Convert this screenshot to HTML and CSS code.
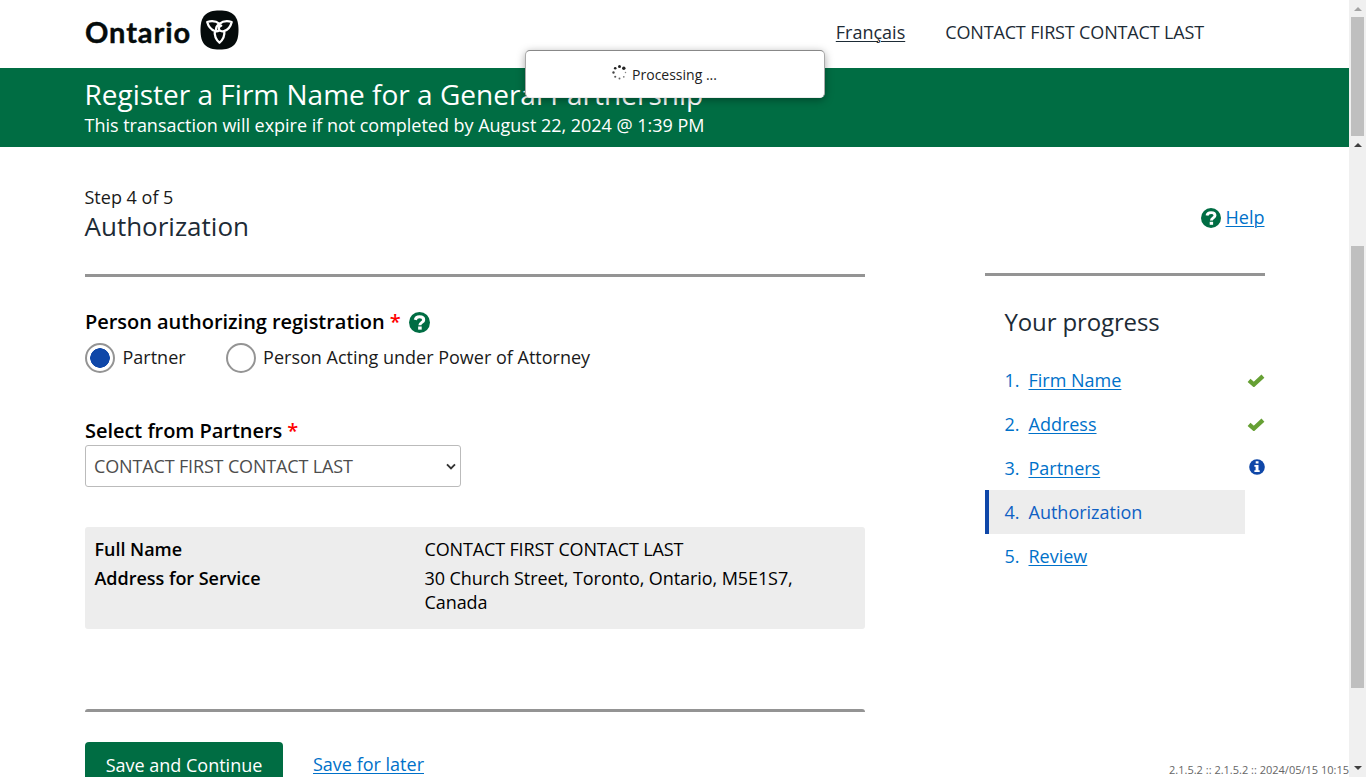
FILE: index.html
```html
<!DOCTYPE html>
<html lang="en">
<head>
<meta charset="utf-8">
<title>Register a Firm Name for a General Partnership</title>
<link rel="stylesheet" href="styles.css">
</head>
<body>
<svg class="defs" width="0" height="0" aria-hidden="true">
  <symbol id="question" viewBox="0 0 20 20">
    <circle cx="10" cy="10" r="10" fill="#006d43"/>
    <path d="M6 7.500C6.400 5.400 8 4.600 10.100 4.600c2.300 0 3.900 1.100 3.900 2.900 0 2.300-3.600 2.500-3.600 5" fill="none" stroke="#fff" stroke-width="2.900"/>
    <rect x="8.700" y="13.800" width="3.400" height="3" fill="#fff"/>
  </symbol>
  <symbol id="check" viewBox="0 0 16 12">
    <path d="M1.600 5.800 6 9.700 14.400 2" fill="none" stroke="#66a034" stroke-width="4"/>
  </symbol>
</svg>
<div class="app">
  <div class="page">
    <header class="masthead">
      <a class="logo"><span class="wordmark">Ontario</span>
        <svg class="trillium" viewBox="0 0 39 40"><path d="M19.500 .5C33 .5 38.500 6 38.500 20S33 39.500 19.500 39.500 .5 34 .5 20 6 .5 19.500 .5Z" fill="#050b0b"/>
          <g fill="none" stroke="#fff" stroke-width="2.300" stroke-linejoin="round" stroke-linecap="round"><path d="M14.800 21C10.800 19.500 8.300 16.200 7.200 12c5-1.500 9-.9 12.300 1.900 3.300-2.800 7.300-3.400 12.200-1.900-1.100 4.500-3.400 7.700-7.400 9 .6 5-1.300 8.700-4.800 11.700-3.500-3-5.300-6.700-4.700-11.700 1.300.5 3 .4 4.500-.4"/><path d="M19.500 13.900c-2.800 1.700-3.800 3.600-3.300 6M24.300 21c-2.300.7-4.300.1-5.200-1.500-.7-1.500.1-3.200 2.100-3.800"/></g></svg>
      </a>
      <a class="lang">Français</a><span class="user caps">CONTACT FIRST CONTACT LAST</span>
    </header>
    <div class="banner"><h1>Register a Firm Name for a General Partnership</h1><p>This transaction will expire if not completed by August 22, 2024 @ 1:39 PM</p></div>
    <div class="content">
      <main class="main">
        <p class="step">Step 4 of 5</p>
        <h2>Authorization</h2>
        <div class="rule"></div>
        <div class="label">Person authorizing registration <b class="req">*</b><svg class="tip"><use href="#question"/></svg></div>
        <div class="radios">
          <span class="radio"><i class="dot on"></i><span class="partner">Partner</span></span>
          <span class="radio"><i class="dot"></i><span>Person Acting under Power of Attorney</span></span>
        </div>
        <div class="label second">Select from Partners <b class="req">*</b></div>
        <div class="select"><span class="caps">CONTACT FIRST CONTACT LAST</span><svg class="chev" viewBox="0 0 10 7"><path d="m1 1.300 4 4 4-4" fill="none" stroke="#333" stroke-width="1.900"/></svg></div>
        <dl class="details">
          <dt>Full Name</dt><dd class="caps">CONTACT FIRST CONTACT LAST</dd>
          <dt>Address for Service</dt><dd class="address">30 Church Street, Toronto, Ontario, M5E1S7, Canada</dd>
        </dl>
        <div class="rule rounded"></div>
        <div class="actions"><a class="save">Save and Continue</a><a class="later">Save for later</a></div>
      </main>
      <aside class="side">
        <div class="help"><svg class="helpicon"><use href="#question"/></svg><a>Help</a></div>
        <div class="rule"></div>
        <h3>Your progress</h3>
        <ol class="steps">
          <li><span class="num">1.</span><a>Firm Name</a><svg class="check"><use href="#check"/></svg></li>
          <li><span class="num">2.</span><a>Address</a><svg class="check"><use href="#check"/></svg></li>
          <li><span class="num">3.</span><a>Partners</a><svg class="info" viewBox="0 0 16 16"><circle cx="8" cy="8" r="7.800" fill="#0f47a8"/><path d="M6.700 2.300h2.800v2.300H6.700zM5.400 5.900h4.100v5.300h1.200v1.900H5.400v-1.900h1.200V7.800H5.400z" fill="#fff"/></svg></li>
          <li class="current"><span class="num">4.</span><span>Authorization</span></li>
          <li><span class="num">5.</span><a>Review</a></li>
        </ol>
      </aside>
    </div>
  </div>
  <div class="scrolls">
    <div class="track top"><i class="arrow up dim"></i><i class="thumb"></i></div>
    <div class="track bottom"><i class="arrow up"></i><i class="thumb"></i><i class="arrow down"></i></div>
  </div>
  <div class="version">2.1.5.2 :: 2.1.5.2 :: 2024/05/15 10:15</div>
  <div class="processing"><svg class="spinner" viewBox="0 0 14 14"><g fill="#222"><circle cx="7" cy="1.500" r="1.400"/><circle cx="11" cy="3" r="1.600"/><circle cx="12.600" cy="7" r=".7" opacity=".55"/><circle cx="11" cy="11" r=".8" opacity=".6"/><circle cx="7" cy="12.600" r=".9" opacity=".7"/><circle cx="3" cy="11" r="1" opacity=".75"/><circle cx="1.400" cy="7" r="1.100" opacity=".85"/><circle cx="3" cy="3" r="1.200"/></g></svg><span>Processing ...</span></div>
</div>
</body>
</html>
```
FILE: styles.css
```css
* { box-sizing: border-box; }
body { margin: 0; overflow: hidden; font: 18px/24px "Open Sans", sans-serif; color: #1a1a1a; background: #fff; }
h1, h2, h3, p, dl, dd, ol { margin: 0; padding: 0; font-weight: 400; }
a { color: #0071c9; text-decoration: underline; text-decoration-thickness: 1px; text-underline-offset: 2px; }
.caps { letter-spacing: -.15px; }
.defs { display: none; }
.app { position: relative; display: flex; width: 1366px; height: 777px; overflow: hidden; }
.page { width: 1349px; }
.masthead { height: 68px; padding: 0 145px 4px 85px; display: flex; align-items: center; }
.masthead .logo { display: flex; align-items: center; text-decoration: none; color: #050b0b; margin-right: auto; }
.wordmark { width: 107px; margin-right: 8px; font: 700 29px/40px Lato, sans-serif; letter-spacing: .9px; -webkit-text-stroke: .4px #050b0b; white-space: nowrap; }
.trillium { width: 39px; height: 40px; margin-top: -4px; }
.masthead .lang { margin-right: 40px; color: #1d2b36; }
.user { color: #1d2b36; }
.banner { height: 79px; padding: 8px 84.500px 0; background: #006d43; color: #fff; }
.banner h1 { font-size: 28px; line-height: 36px; white-space: nowrap; }
.banner p { line-height: 27px; letter-spacing: -.02px; }
.content { display: flex; padding-left: 85px; }
.main { width: 780px; padding-top: 37px; }
.step { line-height: 26px; margin-left: -.5px; }
h2 { font-size: 26px; line-height: 32px; color: #1d2b36; margin-left: -.5px; }
.rule { height: 3px; background: #949494; }
.main h2 + .rule { margin-top: 32px; }
.label { display: flex; align-items: center; gap: 5px; height: 30px; margin-top: 30px; font-size: 20px; font-weight: 600; color: #000; letter-spacing: -.04px; }
.req { color: red; font-weight: 600; }
.tip { width: 21px; height: 21px; margin-left: 3px; }
.radios { display: flex; height: 42px; align-items: center; gap: 40px; }
.radio { display: flex; align-items: center; gap: 8px; }
.radio span { margin: -2px 0 0 -.5px; }
.dot { width: 30px; height: 30px; border: 2px solid #949494; border-radius: 50%; }
.dot.on { background: radial-gradient(circle, #0f47a8 9.500px, #fff 10px); }
.label.second { margin-top: 37px; margin-bottom: -1px; }
.select { width: 376px; height: 42px; border: 1px solid #bbb; border-radius: 3px; padding: 0 4px 0 8px; display: flex; align-items: center; justify-content: space-between; color: #4d4d4d; }
.chev { width: 10px; height: 7px; }
.details { margin-top: 40px; height: 102px; padding: 10px 9.500px; background: #ededed; border-radius: 3px; display: grid; grid-template-columns: 330px 400px; grid-template-rows: 24px 48px; row-gap: 5px; color: #000; }
dt { font-weight: 600; letter-spacing: -.03px; }
.address { letter-spacing: -.08px; }
.rule.rounded { margin-top: 80px; border-radius: 3px 3px 0 0; }
.actions { margin-top: 30px; display: flex; height: 46px; }
.save { width: 198px; color: #fff; background: #006d43; border-radius: 4px; text-decoration: none; text-align: center; line-height: 46px; }
.later { margin-left: 30px; line-height: 44px; }
.side { width: 280px; margin-left: 120px; padding-top: 55px; }
.help { display: flex; height: 32px; align-items: center; justify-content: flex-end; gap: 5px; }
.help a { margin: -2px .5px 0 -.5px; }
.helpicon { width: 20px; height: 20px; }
.side .rule { margin-top: 39px; }
h3 { margin: 30px 0 20px 19.500px; font-size: 24px; line-height: 32px; height: 32px; color: #1d2b36; letter-spacing: -.13px; }
.steps { list-style: none; }
.steps li { height: 44px; padding: 0 0 0 19.500px; display: flex; align-items: center; color: #0071c9; }
.num { width: 24px; }
.check { width: 18px; height: 13px; margin-left: auto; }
.info { width: 16px; height: 16px; margin: -2px 0 0 auto; }
.steps .current { width: 260px; padding-left: 15.500px; border-left: 4px solid #0f47a8; background: #ededed; color: #0f61c4; }
.scrolls { width: 17px; }
.track { display: flex; flex-direction: column; align-items: center; background: #f0f0f0; }
.top { height: 137px; }
.bottom { height: 640px; }
.thumb { width: 13px; background: #bfbfbf; }
.top .thumb { height: 119px; margin-top: 6px; }
.bottom .thumb { height: 442px; margin-top: 99px; }
.arrow { border: 4px solid transparent; width: 0; height: 0; }
.up { border-top: 0; border-bottom-color: #404040; margin-top: 6px; }
.top .up { margin-top: 7px; border-bottom-color: #a3a3a3; }
.down { border-bottom: 0; border-top-color: #404040; margin-top: 78px; }
.version { position: absolute; right: 17px; bottom: 0; font-size: 11px; line-height: 14px; color: #666; }
.processing { position: absolute; left: 525px; top: 50px; width: 300px; height: 48px; background: #fff; border: 1px solid #999; border-color: #888 #aaa #eee; border-radius: 5px; box-shadow: 0 2px 8px rgba(0,0,0,.35); display: flex; align-items: center; justify-content: center; gap: 5px; font-size: 14px; padding: 1px 21px 0 0; color: #222; }
.spinner { width: 15px; height: 15px; margin-top: -5px; }
```
